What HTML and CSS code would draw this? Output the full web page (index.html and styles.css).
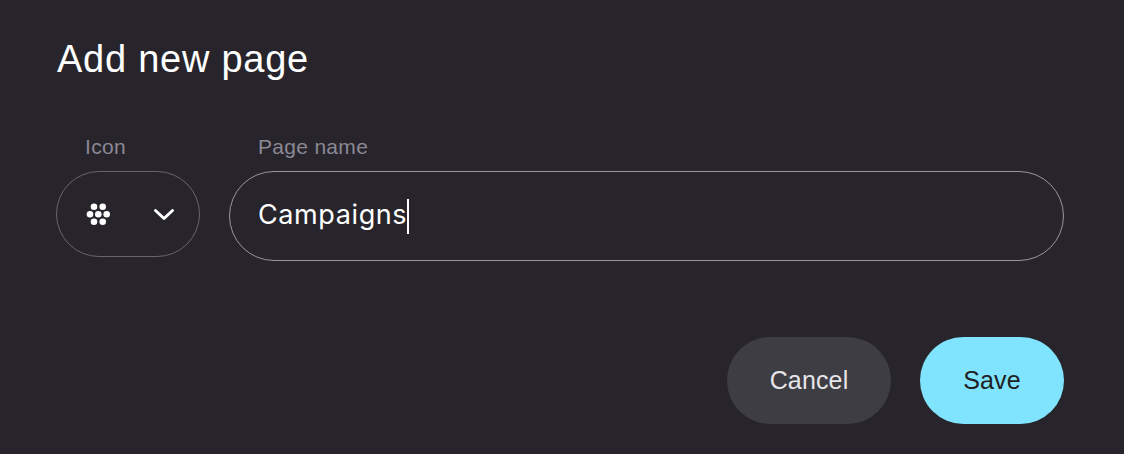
FILE: index.html
```html
<!DOCTYPE html>
<html lang="en">
<head>
<meta charset="utf-8">
<title>Add new page</title>
<link rel="stylesheet" href="styles.css">
</head>
<body>
<main class="dialog">
  <h1 class="title">Add new page</h1>
  <div class="fields">
    <div class="field field-icon">
      <label class="label">Icon</label>
      <div class="select">
        <svg class="dots" width="24" height="24" viewBox="0 0 24 24" fill="#fff">
          <circle cx="8" cy="4.7" r="3.3"/><circle cx="16.7" cy="4.7" r="3.3"/>
          <circle cx="4" cy="12.2" r="3.3"/><circle cx="12.3" cy="12.2" r="3.3"/><circle cx="20.7" cy="12.2" r="3.3"/>
          <circle cx="8" cy="19.7" r="3.3"/><circle cx="16.7" cy="19.7" r="3.3"/>
        </svg>
        <svg class="chev" width="22" height="14" viewBox="0 0 22 14" fill="none" stroke="#fff" stroke-width="3" stroke-linecap="round" stroke-linejoin="round">
          <path d="M2.5 3.5l8.5 8 8.5-8"/>
        </svg>
      </div>
    </div>
    <div class="field field-name">
      <label class="label">Page name</label>
      <div class="input"><span class="value">Campaigns</span><span class="caret"></span></div>
    </div>
  </div>
  <div class="actions">
    <button class="btn btn-cancel">Cancel</button>
    <button class="btn btn-save">Save</button>
  </div>
</main>
</body>
</html>
```
FILE: styles.css
```css
* { box-sizing: border-box; }
html, body { margin: 0; height: 100%; }
body {
  background: #27252b;
  font-family: "Liberation Sans", Arial, sans-serif;
  overflow: hidden;
}
.dialog {
  width: 1124px;
  height: 454px;
  padding: 38px 60px 30px 56px;
  display: flex;
  flex-direction: column;
}
.title {
  margin: 0 0 0 1px;
  font-size: 38px;
  line-height: 42px;
  font-weight: 400;
  letter-spacing: 0.75px;
  color: #fff;
}
.fields {
  display: flex;
  gap: 29px;
  margin-top: 54px;
  align-items: flex-start;
}
.field { display: flex; flex-direction: column; }
.field-icon { width: 144px; }
.field-name { flex: 1; }
.label {
  height: 23px;
  margin-bottom: 14px;
  font-size: 21px;
  line-height: 25px;
  letter-spacing: 0.3px;
  color: #8b8895;
}
.field-icon .label { padding-left: 29px; }
.field-name .label { padding-left: 29px; }
.select {
  height: 86px;
  border: 1px solid #686571;
  border-radius: 43px;
  display: flex;
  align-items: center;
  justify-content: space-between;
  padding: 0 24px 0 29px;
}
.dots { flex: none; }
.chev { flex: none; }
.input {
  height: 90px;
  border: 1px solid #98959f;
  border-radius: 45px;
  display: flex;
  align-items: center;
  padding-left: 28px;
}
.value {
  font-family: "Inter", sans-serif;
  font-size: 27px;
  line-height: 30px;
  letter-spacing: 0.6px;
  margin-top: -2px;
  color: #fff;
}
.caret {
  width: 2px;
  height: 35px;
  background: #fff;
}
.actions {
  display: flex;
  justify-content: flex-end;
  gap: 29px;
  margin-top: 76px;
}
.btn {
  height: 87px;
  border: 0;
  border-radius: 44px;
  font-family: inherit;
  font-size: 25px;
  letter-spacing: 0.15px;
}
.btn-cancel { width: 164px; background: #3e3d43; color: #e6e5e9; }
.btn-save { width: 144px; background: #81e4fe; color: #1f1e22; }
```
